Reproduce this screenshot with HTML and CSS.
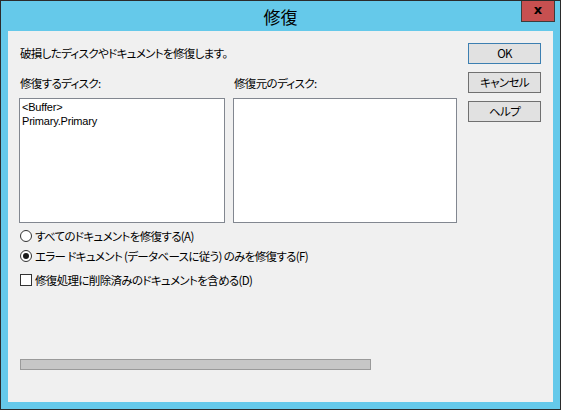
FILE: index.html
```html
<!DOCTYPE html>
<html lang="ja">
<head>
<meta charset="utf-8">
<title>修復</title>
<link rel="stylesheet" href="styles.css">
</head>
<body>
<div class="window">
  <div class="titlebar">
    <span class="title">修復</span>
    <div class="close">x</div>
  </div>
  <div class="client">
    <div class="main">
      <p class="desc">破損したディスクやドキュメントを修復します。</p>
      <div class="lists">
        <div class="col col-left">
          <div class="label">修復するディスク:</div>
          <div class="listbox">
            <div class="item">&lt;Buffer&gt;</div>
            <div class="item">Primary.Primary</div>
          </div>
        </div>
        <div class="col col-right">
          <div class="label">修復元のディスク:</div>
          <div class="listbox"></div>
        </div>
      </div>
      <div class="option opt-first"><span class="radio"></span><span>すべてのドキュメントを修復する(A)</span></div>
      <div class="option"><span class="radio checked"></span><span>エラー ドキュメント (データベースに従う) のみを修復する(F)</span></div>
      <div class="option opt-check"><span class="checkbox"></span><span>修復処理に削除済みのドキュメントを含める(D)</span></div>
      <div class="progress"></div>
    </div>
    <div class="buttons">
      <div class="btn btn-default">OK</div>
      <div class="btn">キャンセル</div>
      <div class="btn">ヘルプ</div>
    </div>
  </div>
</div>
</body>
</html>
```

FILE: styles.css
```css
* { box-sizing: border-box; }
html, body { margin: 0; padding: 0; background: #ffffff; }
body {
  font-family: "Noto Sans CJK JP", "Noto Sans", sans-serif;
  font-size: 11.5px;
  letter-spacing: -0.65px;
  color: #000;
  font-feature-settings: "palt";
}
.window {
  width: 561px;
  height: 410px;
  border: 1px solid #2b2b2b;
  background: #65c9ea;
  padding: 0 7px 7px 7px;
  display: flex;
  flex-direction: column;
}
.titlebar {
  height: 30px;
  display: flex;
  align-items: center;
  justify-content: center;
  position: relative;
}
.title {
  font-size: 17px;
  letter-spacing: 0;
  line-height: 20px;
  margin-top: 1px;
  color: #000;
}
.close {
  position: absolute;
  top: 0;
  right: -2px;
  width: 34px;
  height: 21px;
  background: #c75050;
  border: 1px solid #3c3c3c;
  border-top: none;
  color: #000;
  font-family: "DejaVu Sans", sans-serif;
  font-weight: bold;
  font-size: 13px;
  letter-spacing: 0;
  line-height: 18px;
  text-align: center;
}
.client {
  flex: 1;
  background: #f0f0f0;
  display: flex;
  padding: 12px 12px 0 11px;
}
.main {
  width: 438px;
  display: flex;
  flex-direction: column;
}
.desc {
  margin: 0;
  height: 20px;
  line-height: 20px;
  padding-left: 1px;
}
.lists {
  margin-top: 10px;
  display: flex;
  gap: 8px;
}
.col-left { width: 206px; }
.col-right { width: 224px; }
.label {
  height: 20px;
  line-height: 20px;
  padding-left: 1px;
  margin-bottom: 5px;
}
.listbox {
  height: 125px;
  background: #fff;
  border: 1px solid #828790;
  padding: 1px 0 0 2px;
}
.item {
  font-family: "Liberation Sans", Arial, sans-serif;
  font-size: 11px;
  letter-spacing: -0.2px;
  line-height: 14px;
  height: 14px;
}
.option {
  height: 20px;
  display: flex;
  align-items: center;
  padding-left: 1px;
}
.opt-first { margin-top: 3px; }
.opt-check { margin-top: 4px; }
.radio {
  width: 12px;
  height: 12px;
  border: 1px solid #333;
  border-radius: 50%;
  background: #fff;
  margin-right: 3px;
  display: flex;
  align-items: center;
  justify-content: center;
  flex: none;
}
.radio.checked::after {
  content: "";
  width: 6px;
  height: 6px;
  border-radius: 50%;
  background: #1a1a1a;
}
.checkbox {
  width: 12px;
  height: 12px;
  border: 1px solid #333;
  background: #fff;
  margin-right: 3px;
  flex: none;
}
.progress {
  margin-top: 69px;
  margin-left: 1px;
  width: 351px;
  height: 11px;
  background: #c6c6c6;
  border: 1px solid #9a9a9a;
}
.buttons {
  margin-left: 11px;
  width: 73px;
  display: flex;
  flex-direction: column;
  gap: 8px;
}
.btn {
  height: 21px;
  background: #e1e1e1;
  border: 1px solid #707070;
  text-align: center;
  line-height: 19px;
}
.btn-default {
  border-color: #3c7fb1;
}
```
